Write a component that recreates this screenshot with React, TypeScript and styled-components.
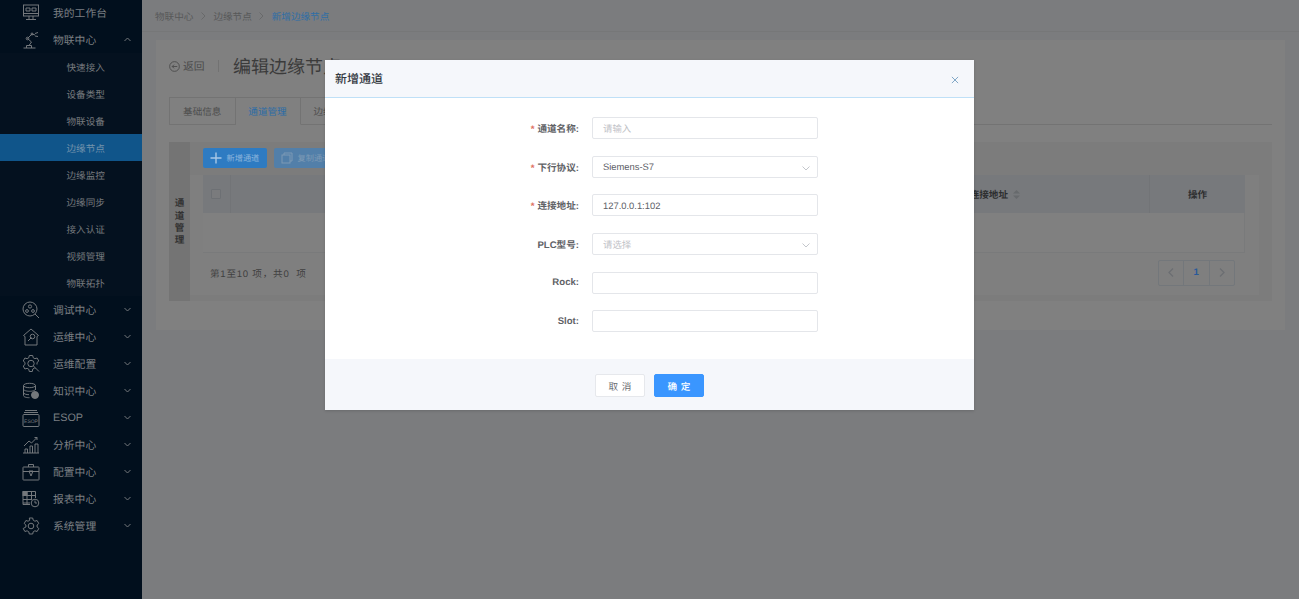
import React from 'react';
import styled, { createGlobalStyle } from 'styled-components';

const Global = createGlobalStyle`
  html, body { margin: 0; padding: 0; height: 100%; overflow: hidden; }
  body { font-family: "Liberation Sans", "Noto Sans CJK SC", sans-serif; background: #7b7c7e; text-rendering: geometricPrecision; }
  * { box-sizing: border-box; }
`;

const Shell = styled.div`
  position: relative;
  display: grid;
  grid-template-columns: 142px 1fr;
  width: 1299px;
  height: 599px;
  overflow: hidden;
`;
const Side = styled.aside`
  background: #010f1d;
  margin-top: -1px;
  height: 600px;
`;
const MenuRow = styled.div`
  display: flex;
  align-items: center;
  height: 27.03px;
  color: #7b7f83;
  font-size: 10.8px;
  position: relative;
`;
const IconSlot = styled.span`
  width: 18px;
  height: 18px;
  margin: 0 13px 0 22px;
  display: flex;
  color: #74787c;
  svg { width: 18px; height: 18px; }
`;
const Caret = styled.svg`
  position: absolute;
  left: 124px;
  top: 11px;
  width: 7px;
  height: 5px;
`;
const SubList = styled.div`
  background: #04111f;
`;
const SubRow = styled.div<{ $active?: boolean }>`
  height: 27.03px;
  display: flex;
  align-items: center;
  padding-left: 66.5px;
  font-size: 9.6px;
  color: ${p => (p.$active ? '#7393ac' : '#767a7e')};
  background: ${p => (p.$active ? '#10558a' : 'transparent')};
`;
const Main = styled.main`
  min-width: 0;
`;
const Crumbs = styled.nav`
  height: 32px;
  display: flex;
  align-items: center;
  padding-left: 13px;
  font-size: 9.6px;
  color: #575859;
  border-bottom: 1px solid #767778;
`;
const Sep = styled.svg`
  width: 5px;
  height: 8px;
  margin: 0 7.5px;
`;
const CrumbNow = styled.span`
  color: #2f6ea6;
`;
const Card = styled.section`
  margin: 8px 14px 0;
  height: 290px;
  background: #808080;
  padding: 13px 13px 0;
`;
const TitleBar = styled.div`
  display: flex;
  align-items: center;
  height: 26px;
  font-size: 10.8px;
  color: #4c4c4c;
`;
const Back = styled.span`
  display: flex;
  align-items: center;
  gap: 3px;
  svg { width: 11px; height: 11px; }
`;
const Divider = styled.i`
  width: 1px;
  height: 12px;
  margin: 0 14.5px 0 13px;
  background: #727272;
`;
const Title = styled.h1`
  margin: 0;
  font-size: 18px;
  font-weight: 400;
  color: #3b3b3b;
  white-space: nowrap;
`;
const Tabs = styled.div`
  display: flex;
  margin-top: 18px;
  height: 28px;
  border-bottom: 1px solid #737373;
`;
const Tab = styled.div<{ $active?: boolean; $wide?: boolean; $first?: boolean }>`
  width: ${p => (p.$wide ? '90px' : p.$first ? '66.5px' : '65px')};
  height: 28px;
  border: 1px solid #737373;
  border-left-width: ${p => (p.$first ? 1 : 0)}px;
  border-bottom: 1px solid ${p => (p.$active ? '#808080' : '#737373')};
  display: flex;
  align-items: center;
  justify-content: ${p => (p.$wide ? 'flex-start' : 'center')};
  padding-left: ${p => (p.$wide ? '13px' : 0)};
  font-size: 9.6px;
  color: ${p => (p.$active ? '#2c6ca6' : '#4d4d4d')};
`;
const Panel = styled.div`
  margin-top: 17px;
  height: 159px;
  background: #7c7c7c;
  display: flex;
`;
const Rail = styled.div`
  width: 21px;
  background: #747474;
  display: flex;
  align-items: center;
  justify-content: center;
  text-align: center;
  font-size: 9.6px;
  font-weight: 700;
  line-height: 12.4px;
  color: #323232;
  padding-top: 3px;
`;
const Content = styled.div`
  width: 1069px;
  height: 153px;
`;
const Toolbar = styled.div`
  height: 33px;
  padding: 6px 0 0 13px;
  display: flex;
  gap: 7px;
`;
const ToolBtn = styled.div<{ $muted?: boolean }>`
  height: 20px;
  width: ${p => (p.$muted ? '80px' : '64px')};
  border-radius: 2px;
  display: flex;
  align-items: center;
  gap: 5px;
  padding-left: 6.5px;
  font-size: 8.2px;
  background: ${p => (p.$muted ? '#527fa9' : '#2e7bc2')};
  color: ${p => (p.$muted ? '#7d9ab5' : '#8cb5dc')};
  svg { width: 12px; height: 12px; flex: none; }
`;
const TableArea = styled.div`
  background: #7f7f7f;
  height: 120px;
  padding: 0 14px 0 13px;
`;
const HeadRow = styled.div`
  height: 38px;
  background: #77797c;
  display: grid;
  grid-template-columns: 28px 919px 95px;
  font-size: 9.6px;
  font-weight: 700;
  color: #2d2e2f;
`;
const HeadCell = styled.div<{ $align?: string; $check?: boolean }>`
  display: flex;
  align-items: center;
  justify-content: ${p => p.$align || 'center'};
  padding-right: ${p => (p.$check ? '2px' : 0)};
  border-right: 1px solid #727477;
  &:last-child { border-right: 0; }
`;
const Check = styled.i`
  width: 10px;
  height: 10px;
  background: #7a7b7d;
  border: 1px solid #6d7074;
  border-radius: 1px;
`;
const Sort = styled.svg`
  width: 7px;
  height: 9px;
  margin: 0 129px 0 5px;
`;
const BodyRow = styled.div`
  height: 40px;
  background: #808080;
  border-right: 1px solid #797a7b;
  border-bottom: 1px solid #797a7b;
`;
const Foot = styled.div`
  display: flex;
  justify-content: space-between;
  align-items: center;
  height: 42px;
  padding: 0 10px 3px 7px;
  font-size: 9.6px;
  letter-spacing: 0.75px;
  color: #3f3f3f;
`;
const Pager = styled.div`
  display: flex;
  width: 77px;
  height: 26px;
  border: 1px solid #73777b;
  border-radius: 2px;
`;
const PageCell = styled.div<{ $on?: boolean }>`
  flex: 1;
  display: flex;
  align-items: center;
  justify-content: center;
  font-size: 9.6px;
  font-weight: 700;
  color: ${p => (p.$on ? '#28599a' : '#6b6e72')};
  border-left: ${p => (p.$on ? '1px solid #73777b' : 0)};
  border-right: ${p => (p.$on ? '1px solid #73777b' : 0)};
  svg { width: 6px; height: 9px; }
`;
const Modal = styled.div`
  position: absolute;
  left: 325px;
  top: 60px;
  width: 649px;
  height: 350px;
  background: #fff;
  display: flex;
  flex-direction: column;
  box-shadow: 0 1px 3px rgba(0, 0, 0, 0.15);
`;
const ModalHead = styled.header`
  height: 38px;
  flex: none;
  display: flex;
  align-items: center;
  justify-content: space-between;
  padding: 0 15px 0 10px;
  background: #f5f7fb;
  border-bottom: 1px solid #bfe0f7;
  font-size: 12px;
  font-weight: 500;
  color: #33383f;
  svg { width: 8px; height: 8px; margin-top: 3px; }
`;
const ModalBody = styled.div`
  flex: 1;
  display: flex;
  flex-direction: column;
  gap: 16.6px;
  padding-top: 19.2px;
`;
const Row = styled.div`
  display: flex;
  align-items: center;
  height: 22px;
`;
const Label = styled.label`
  width: 254px;
  margin-right: 13px;
  text-align: right;
  font-size: 9.6px;
  font-weight: 700;
  color: #5f6266;
`;
const Star = styled.span`
  color: #e0705f;
  margin-right: 3px;
`;
const Field = styled.div<{ $empty?: boolean }>`
  position: relative;
  width: 226px;
  height: 22px;
  border: 1px solid #e4e6ea;
  border-radius: 2px;
  display: flex;
  align-items: center;
  padding-left: 10px;
  font-size: 9.4px;
  color: ${p => (p.$empty ? '#bfc2c7' : '#5c6066')};
  svg { position: absolute; right: 7px; top: 9px; width: 8px; height: 5px; }
`;
const ModalFoot = styled.footer`
  height: 51px;
  flex: none;
  background: #f5f7fb;
  display: flex;
  justify-content: center;
  align-items: flex-start;
  gap: 9px;
  padding: 15px 0 0 0;
`;
const Btn = styled.div<{ $primary?: boolean }>`
  width: 50px;
  height: 23px;
  border-radius: 2px;
  display: flex;
  align-items: center;
  justify-content: center;
  font-size: 9.6px;
  word-spacing: 1px;
  background: ${p => (p.$primary ? '#3a96ff' : '#fff')};
  border: 1px solid ${p => (p.$primary ? '#3a96ff' : '#e6e8ec')};
  color: ${p => (p.$primary ? '#fff' : '#66696e')};
  font-weight: ${p => (p.$primary ? 500 : 400)};
`;

const S = { fill: 'none', stroke: 'currentColor', strokeWidth: 1 } as const;
const icons: Record<string, React.ReactNode> = {
  desk: <svg viewBox="0 0 18 18" {...S}><rect x="1.5" y="1" width="15" height="11" /><path d="M1.5 9.5h15M4 4h4v3H4zM10 4h4v3h-4zM7 12v3M11 12v3M4 15.5h10" /></svg>,
  robot: <svg viewBox="0 0 18 18" {...S}><path d="M1.5 17h12M4.500 17v-2.500h5V17M7 14.500L9.500 11 5.500 7.500 10 3l3 1M13 2.500l3-1M13 5l3 .5" /><circle cx="5.500" cy="7.500" r="1.300" /><circle cx="10" cy="3" r="1" /></svg>,
  debug: <svg viewBox="0 0 18 18" {...S}><circle cx="8" cy="8" r="7" /><circle cx="8" cy="5.5" r="1.6" /><circle cx="5" cy="10" r="1.4" /><circle cx="11" cy="10" r="1.4" /><path d="M13 13l4 4" /></svg>,
  house: <svg viewBox="0 0 18 18" {...S}><path d="M9 1L1.500 7.500 3 8.500V17h12V8.500l1.500-1zM6 13l3.500-3.500" /><circle cx="10.500" cy="8.500" r="2.300" /></svg>,
  cog: <svg viewBox="0 0 18 18" {...S}><path d="M13.500 13.500l-1-.5-1.700 1-.5 2.500h-3l-.5-2.200-1.700-1-2.200.7-1.700-3L3 9.500v-2L1.200 6l1.700-3 2.200.7 1.700-1L7.300.5h3.400l.5 2.200 1.700 1 2.200-.7 1.700 3L15 7.500v2" /><circle cx="9" cy="8.500" r="3.200" /><path d="M11.500 11l5.500 5.500" /></svg>,
  data: <svg viewBox="0 0 18 18" {...S}><ellipse cx="7.500" cy="3.500" rx="6" ry="2.200" /><path d="M1.500 3.500v10c0 1.500 3 2.200 6 2.200M1.500 7c0 1.500 3 2.300 6 2.300s6-.8 6-2.300M1.500 10.500c0 1.500 3 2.200 5.500 2.200M13.500 3.500V8" /><circle cx="13" cy="13" r="3.500" fill="currentColor" /></svg>,
  esop: <svg viewBox="0 0 18 18" {...S}><path d="M3 1.500h12M2 3.500h14" /><rect x="1" y="5.500" width="16" height="12" rx="1" /><text x="9" y="13.800" fontSize="5" textAnchor="middle" fill="currentColor" stroke="none" fontFamily="Liberation Sans">ESOP</text></svg>,
  chart: <svg viewBox="0 0 18 18" {...S}><path d="M1 17h16M3 17v-4h2.500v4M8 17v-7h2.500v7M13 17V8h3v9M2 10l5-5 2.500 2L15 1.500M12.500 1.500H15V4" /></svg>,
  box: <svg viewBox="0 0 18 18" {...S}><rect x="1" y="4" width="16" height="13" rx=".5" /><path d="M6.500 4V1.500h5V4M1 8.500h16M7 8l2 5 2-5z" /></svg>,
  table: <svg viewBox="0 0 18 18" {...S}><path d="M1 1.500h12.500V8M1 1.500v13h7M1 5.500h12.500M1 9.500h9M1 13h7M5 1.500v13M9.500 1.500v8" /><rect x="1" y="1.500" width="4" height="4" fill="currentColor" /><circle cx="13" cy="13" r="3.800" /><path d="M13 10.500V13h2" /></svg>,
  gear: <svg viewBox="0 0 18 18" {...S}><path d="M7.300 1h3.400l.5 2.200 1.700 1 2.200-.7 1.700 3-1.700 1.500v2l1.700 1.500-1.700 3-2.200-.7-1.700 1-.5 2.200H7.300l-.5-2.200-1.700-1-2.200.7-1.700-3L3.900 10V8L2.200 6.500l1.700-3 2.200.7 1.700-1z" /><circle cx="9" cy="9" r="2.800" /></svg>,
};

const Up = () => <Caret viewBox="0 0 7 5" fill="none" stroke="#74787c"><path d="M.5 4L3.500 1l3 3" /></Caret>;
const Down = () => <Caret viewBox="0 0 7 5" fill="none" stroke="#74787c"><path d="M.5 1l3 3 3-3" /></Caret>;
const Chevron = () => <svg viewBox="0 0 8 5" fill="none" stroke="#c4c7cc"><path d="M.5 .5L4 4l3.500-3.500" /></svg>;
const Arrow = ({ left }: { left?: boolean }) => <svg viewBox="0 0 6 9" fill="none" stroke="currentColor" strokeWidth="1.200"><path d={left ? 'M5 .5L1 4.500l4 4' : 'M1 .5l4 4-4 4'} /></svg>;

const subs = ['快速接入', '设备类型', '物联设备', '边缘节点', '边缘监控', '边缘同步', '接入认证', '视频管理', '物联拓扑'];
const lower: [string, string][] = [['调试中心', 'debug'], ['运维中心', 'house'], ['运维配置', 'cog'], ['知识中心', 'data'], ['ESOP', 'esop'], ['分析中心', 'chart'], ['配置中心', 'box'], ['报表中心', 'table'], ['系统管理', 'gear']];
const fields: { label: string; star?: boolean; value?: string; hint?: string; select?: boolean }[] = [
  { label: '通道名称:', star: true, hint: '请输入' },
  { label: '下行协议:', star: true, value: 'Siemens-S7', select: true },
  { label: '连接地址:', star: true, value: '127.0.0.1:102' },
  { label: 'PLC型号:', hint: '请选择', select: true },
  { label: 'Rock:' },
  { label: 'Slot:' },
];

export default function App() {
  return (
    <Shell>
      <Global />
      <Side>
        <MenuRow><IconSlot>{icons.desk}</IconSlot>我的工作台</MenuRow>
        <MenuRow><IconSlot>{icons.robot}</IconSlot>物联中心<Up /></MenuRow>
        <SubList>
          {subs.map(s => <SubRow key={s} $active={s === '边缘节点'}>{s}</SubRow>)}
        </SubList>
        {lower.map(([t, i]) => (
          <MenuRow key={t}><IconSlot>{icons[i]}</IconSlot>{t}<Down /></MenuRow>
        ))}
      </Side>
      <Main>
        <Crumbs>
          物联中心
          <Sep viewBox="0 0 5 8" fill="none" stroke="#68696a"><path d="M.5 .5L4 4 .5 7.500" /></Sep>
          边缘节点
          <Sep viewBox="0 0 5 8" fill="none" stroke="#68696a"><path d="M.5 .5L4 4 .5 7.500" /></Sep>
          <CrumbNow>新增边缘节点</CrumbNow>
        </Crumbs>
        <Card>
          <TitleBar>
            <Back>
              <svg viewBox="0 0 12 12" fill="none" stroke="currentColor"><circle cx="6" cy="6" r="5.300" /><path d="M9 6H3.500M5.500 4L3.500 6l2 2" /></svg>
              返回
            </Back>
            <Divider />
            <Title>编辑边缘节点</Title>
          </TitleBar>
          <Tabs>
            <Tab $first>基础信息</Tab>
            <Tab $active>通道管理</Tab>
            <Tab $wide>边缘配置</Tab>
          </Tabs>
          <Panel>
            <Rail>通<br />道<br />管<br />理</Rail>
            <Content>
              <Toolbar>
                <ToolBtn>
                  <svg viewBox="0 0 12 12" stroke="#a9c8e6" strokeWidth="1.400"><path d="M6 .5v11M.5 6h11" /></svg>
                  新增通道
                </ToolBtn>
                <ToolBtn $muted>
                  <svg viewBox="0 0 12 12" fill="none" stroke="#7d9ab5"><rect x="1" y="3" width="8" height="8" /><path d="M3 3V1h8v8H9" /></svg>
                  复制通道
                </ToolBtn>
              </Toolbar>
              <TableArea>
                <HeadRow>
                  <HeadCell $check><Check /></HeadCell>
                  <HeadCell $align="flex-end">
                    连接地址
                    <Sort viewBox="0 0 7 9" fill="#676a6d"><path d="M3.500 0L7 3.500H0zM3.500 9L0 5.500h7z" /></Sort>
                  </HeadCell>
                  <HeadCell>操作</HeadCell>
                </HeadRow>
                <BodyRow />
                <Foot>
                  <span>第1至10 项，共0&nbsp; 项</span>
                  <Pager>
                    <PageCell><Arrow left /></PageCell>
                    <PageCell $on>1</PageCell>
                    <PageCell><Arrow /></PageCell>
                  </Pager>
                </Foot>
              </TableArea>
            </Content>
          </Panel>
        </Card>
      </Main>
      <Modal>
        <ModalHead>
          新增通道
          <svg viewBox="0 0 9 9" fill="none" stroke="#7fa6c6" strokeWidth="1.100"><path d="M1 1l7 7M8 1L1 8" /></svg>
        </ModalHead>
        <ModalBody>
          {fields.map(f => (
            <Row key={f.label}>
              <Label>{f.star && <Star>*</Star>}{f.label}</Label>
              <Field $empty={!f.value}>
                {f.value || f.hint}
                {f.select && <Chevron />}
              </Field>
            </Row>
          ))}
        </ModalBody>
        <ModalFoot>
          <Btn>取 消</Btn>
          <Btn $primary>确 定</Btn>
        </ModalFoot>
      </Modal>
    </Shell>
  );
}
